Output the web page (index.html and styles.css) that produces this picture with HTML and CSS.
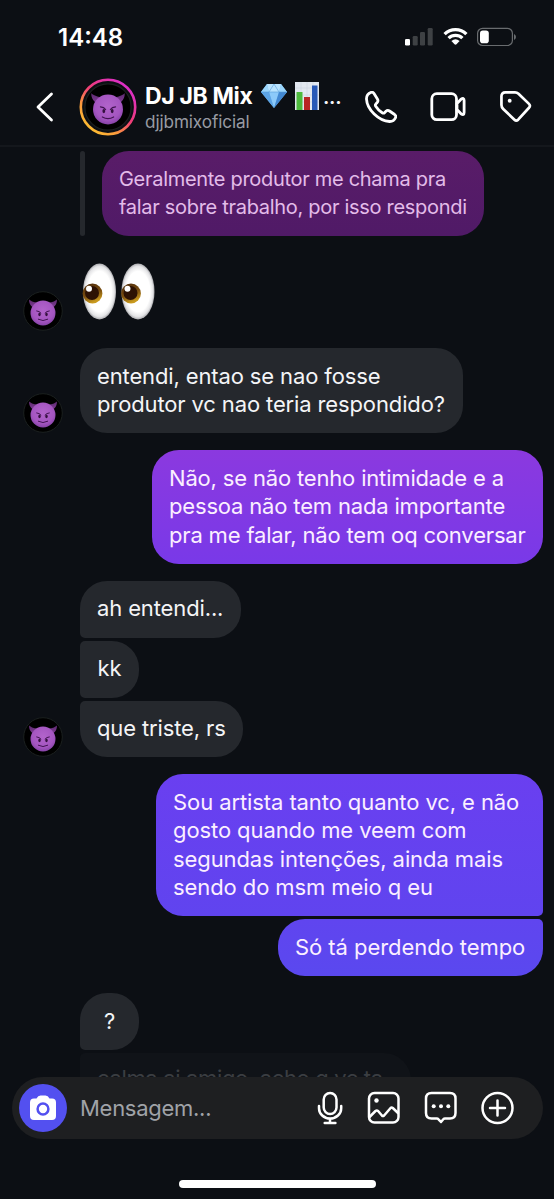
FILE: index.html
```
<!DOCTYPE html>
<html lang="pt-BR">
<head>
<meta charset="utf-8">
<title>DJ JB Mix</title>
<link rel="stylesheet" href="styles.css">
</head>
<body>
<svg class="defs" aria-hidden="true">
  <defs>
    <radialGradient id="skin" cx=".5" cy=".4" r=".62"><stop offset="0" stop-color="#b264cb"/><stop offset=".7" stop-color="#a455c0"/><stop offset="1" stop-color="#8341a4"/></radialGradient>
    <linearGradient id="horn" x1="0" y1="0" x2="0" y2="1"><stop offset="0" stop-color="#5c2a6e"/><stop offset="1" stop-color="#7d3a92"/></linearGradient>
    <radialGradient id="eyeball" cx=".5" cy=".5" r=".5"><stop offset=".72" stop-color="#fff"/><stop offset=".9" stop-color="#e4e4e6"/><stop offset="1" stop-color="#a9a9ad"/></radialGradient>
    <linearGradient id="iris" x1="0" y1="0" x2=".4" y2="1"><stop offset="0" stop-color="#4b2a0c"/><stop offset=".6" stop-color="#7a4e10"/><stop offset="1" stop-color="#c99a1e"/></linearGradient>
    <linearGradient id="ring" x1=".1" y1=".95" x2=".8" y2=".1"><stop offset="0" stop-color="#fdc52f"/><stop offset=".3" stop-color="#fb9a3c"/><stop offset=".6" stop-color="#f03c78"/><stop offset="1" stop-color="#dd2fc4"/></linearGradient>
    <symbol id="devil" viewBox="0 0 40 40">
      <circle cx="20" cy="20" r="19.3" fill="#000" stroke="#1b201f" stroke-width="1"/>
      <path d="M6 8.500q2.500 2.300 7.500 3.300L9.300 16Q6 13.300 6 8.500zM34 8.500q-2.500 2.300-7.500 3.300l4.200 4.200Q34 13.300 34 8.500z" fill="url(#horn)"/>
      <circle cx="20" cy="22" r="12.500" fill="url(#skin)"/>
      <path d="M13.700 19.900q3 .2 4.300 2.200M26.300 19.900q-3 .2-4.300 2.200M15.300 28.300q4.700 2.700 9.400 0" fill="none" stroke="#421452" stroke-width="1" stroke-linecap="round"/>
      <ellipse cx="16.500" cy="23.400" rx="1.200" ry="1.800" fill="#35103f"/><ellipse cx="23.500" cy="23.400" rx="1.200" ry="1.800" fill="#35103f"/>
    </symbol>
  </defs>
</svg>
<div class="phone">
  <div class="status">
    <span class="clock">14:48</span>
    <svg class="status-icons" width="114" height="20" viewBox="0 0 114 20">
      <rect x="1" y="12" width="5" height="6.500" rx="1.300" fill="#fff"/>
      <g fill="#3e4144"><rect x="8.700" y="9" width="5" height="9.500" rx="1.300"/><rect x="16" y="5" width="5" height="13.500" rx="1.300"/><rect x="23.700" y="1" width="5" height="17.500" rx="1.300"/></g>
      <g fill="none" stroke="#fff" stroke-width="3.300"><path d="M40.600 7.100a15.500 15.500 0 0 1 21.800 0"/><path d="M44.600 11.200a9.800 9.800 0 0 1 13.800 0"/></g>
      <path d="M47.400 14q4.100-3.500 8.200 0l-3.100 3.300q-1 .9-2 0z" fill="#fff"/>
      <rect x="73.600" y="1.300" width="34.800" height="17.200" rx="5" fill="none" stroke="#696c6f" stroke-width="1.200"/>
      <rect x="76" y="3.600" width="8.800" height="12.600" rx="2.800" fill="#fff"/>
      <path d="M110 7q2 .8 2 3t-2 3z" fill="#696c6f"/>
    </svg>
  </div>
  <header class="header">
    <svg class="back" width="18" height="30" viewBox="0 0 18 30"><path d="M15.500 2 2 15l13.500 13" class="line"/></svg>
    <svg class="avatar-lg" width="58" height="58" viewBox="0 0 58 58"><circle cx="29" cy="29" r="27.200" fill="none" stroke="url(#ring)" stroke-width="2.600"/><use href="#devil" x="5" y="5" width="48" height="48"/></svg>
    <div class="who">
      <div class="name"><span class="name-text">DJ JB Mix</span>
        <svg class="gem" width="28" height="26" viewBox="0 0 28 26"><path d="M7 1h14l6 8-13 16L1 9z" fill="#70b7ef"/><path d="M7 1 1 9h8zM21 1l6 8h-8z" fill="#9ad5fb"/><path d="M7 1h14l-2 8H9z" fill="#b9e4ff"/><path d="M9 9h10l-5 16z" fill="#8ccafa"/><path d="M1 9h8l5 16z" fill="#5da4e5"/><path d="M19 9h8L14 25z" fill="#4288d2"/><path d="M14 1 9 9m5-8 5 8M1 9h26" stroke="#559bd9" stroke-width=".6"/></svg>
        <svg class="chart" width="24" height="28" viewBox="0 0 24 28"><path d="M0 0h24v28H0z" fill="#e2e8f0"/><path d="M0 6h24M0 13h24M0 20h24M6 0v28M12 0v28M18 0v28" stroke="#ccd4e0" stroke-width=".6"/><path d="M1.500 10H7.500v18H1.500z" fill="#4dba3d"/><path d="M9 15h6v13H9z" fill="#b82623"/><path d="M17 3.500h5.500V28H17z" fill="#2859b7"/></svg>
        <span class="dots">...</span>
      </div>
      <div class="handle">djjbmixoficial</div>
    </div>
    <div class="actions">
      <svg width="32" height="32" viewBox="1 1 32 32"><path class="line" d="M7.200 2.300C4.300 3.500 2.300 5.900 2.500 9.200 3 19.500 14.800 31.200 25.500 31.500c3.300.1 5-1.500 6-3.800.6-1.200.2-2.300-.9-3.200l-5.100-3.500c-1.200-.8-2.500-.7-3.500.3l-1.300 1.300c-.7.600-1.700.6-2.500.1-2.900-1.800-4.800-3.800-6.500-6.500-.5-.8-.4-1.700.2-2.300l1.100-1.200c1.100-1.100 1.200-2.400.4-3.700L10 3.600C9.200 2.300 8.400 1.900 7.200 2.300z"/></svg>
      <svg width="36" height="30" viewBox="1 0 36 30"><rect class="line" x="2.800" y="1.700" width="24.700" height="26" rx="5"/><path class="line" d="m28 11.500 4-4.300q3.100-2 3.100 1.200v12.200q0 3.200-3.100 1.200L28 17.500z"/></svg>
      <svg width="32" height="32" viewBox="1 1 33 33"><path class="line" d="M6.500 2.500h10q2 0 3.600 1.400l10.800 10.400q2 2 0 4L19.700 30.600q-1.900 1.900-3.800 0L4.300 19.500Q2.500 17.700 2.500 15.500v-9q0-4 4-4z"/><circle cx="11" cy="11" r="2" fill="#fff"/></svg>
    </div>
  </header>
  <main class="chat">
    <div class="reply"><div class="bubble quoted">Geralmente produtor me chama pra<br>falar sobre trabalho, por isso respondi</div></div>
    <div class="row eyes-row">
      <svg class="avatar"><use href="#devil"/></svg>
      <svg class="eyes" width="74" height="57" viewBox="0 0 74 57">
        <g id="eye"><ellipse cx="17.500" cy="28.500" rx="16.500" ry="28" fill="url(#eyeball)"/><circle cx="10.500" cy="30.500" r="9.900" fill="url(#iris)"/><circle cx="10" cy="30" r="7" fill="#2d1204"/><circle cx="7" cy="25.700" r="3" fill="#fff"/></g>
        <use href="#eye" x="38.500"/>
      </svg>
    </div>
    <div class="row row-entendi"><svg class="avatar"><use href="#devil"/></svg><div class="bubble in">entendi, entao se nao fosse<br>produtor vc nao teria respondido?</div></div>
    <div class="bubble out out-a">Não, se não tenho intimidade e a<br>pessoa não tem nada importante<br>pra me falar, não tem oq conversar</div>
    <div class="group">
      <div class="bubble in first w-ah">ah entendi...</div>
      <div class="bubble in middle w-short">kk</div>
      <div class="row"><svg class="avatar"><use href="#devil"/></svg><div class="bubble in last w-que">que triste, rs</div></div>
    </div>
    <div class="bubble out out-b">Sou artista tanto quanto vc, e não<br>gosto quando me veem com<br>segundas intenções, ainda mais<br>sendo do msm meio q eu</div>
    <div class="bubble out out-c">Só tá perdendo tempo</div>
    <div class="group">
      <div class="bubble in first w-short">?</div>
      <div class="bubble in middle faded">calma ai amigo, acho q vc ta</div>
    </div>
  </main>
  <footer class="composer">
    <span class="camera"><svg width="28" height="26" viewBox="0 0 28 26"><path d="M5 3.500h2.500Q9 .5 11.500.500h5q2.500 0 4 3H23q4 0 4 4V21q0 4-4 4H5q-4 0-4-4V7.500q0-4 4-4z" fill="#fff"/><circle cx="14" cy="14" r="5.400" fill="#fff" stroke="#5350f0" stroke-width="2.500"/></svg></span>
    <span class="placeholder">Mensagem...</span>
    <div class="tools">
      <svg width="26" height="34" viewBox="0 0 26 34"><rect class="line thin" x="6.700" y="2" width="12.800" height="21" rx="6.400"/><path class="line thin" d="M2 15v2.200a11.100 10.300 0 0 0 22.200 0V15M13 28v4M7.700 32h10.700"/></svg>
      <svg width="34" height="34" viewBox="0 0 34 34"><rect class="line thin" x="2" y="2" width="29.500" height="29.500" rx="5.500"/><circle cx="9.500" cy="9.500" r="2.200" fill="#fff"/><path class="line thin" d="m2.500 26 6-6q1.300-1 2.600 0l3.800 4.500q1 1 2.200 0l6.500-7.500q1-1 2.200 0l5.200 5"/></svg>
      <svg width="34" height="34" viewBox="0 0 34 34"><path class="line thin" d="M7.500 2h18.500q5.500 0 5.500 5.500V22q0 5.500-5.500 5.500h-5q-1 0-1.700.8L17 31l-2.500-2.700q-.7-.8-1.700-.8H7.500Q2 27.500 2 22V7.500Q2 2 7.500 2z"/><g fill="#fff"><circle cx="9.700" cy="15.200" r="2"/><circle cx="17" cy="15.200" r="2"/><circle cx="24.300" cy="15.200" r="2"/></g></svg>
      <svg width="34" height="34" viewBox="0 0 34 34"><circle class="line thin" cx="16.500" cy="17" r="15"/><path class="line thin" d="M16.500 9.500v15M9 17h15"/></svg>
    </div>
  </footer>
  <div class="home"></div>
</div>
</body>
</html>
```
FILE: styles.css
```
* { box-sizing: border-box; }
body { margin: 0; background: #0c0f14; color: #f4f5f7; font-family: Inter, "Liberation Sans", sans-serif; }
svg { display: block; flex: none; }
.defs { position: absolute; width: 0; height: 0; }
.phone { width: 554px; height: 1199px; display: flex; flex-direction: column; overflow: hidden; }
.line { fill: none; stroke: #fff; stroke-width: 2.8; stroke-linecap: round; stroke-linejoin: round; }
.thin { stroke-width: 2.5; }

.status { height: 74px; display: flex; justify-content: space-between; padding: 24px 36px 0 58px; flex: none; }
.clock { padding-top: 1px; font-size: 24px; line-height: 26px; font-weight: 600; color: #fff; }
.status-icons { margin-top: 3px; }

.header { height: 73px; flex: none; display: flex; align-items: flex-start; padding: 3px 21px 0 36px; border-bottom: 2px solid #14171c; }
.back { margin-top: 15px; }
.avatar-lg { margin: 1px 0 0 25px; }
.who { margin-left: 8px; width: 200px; }
.name { display: flex; height: 32px; padding-top: 3px; white-space: nowrap; }
.name-text { width: 108px; margin-right: 7px; font-size: 23px; line-height: 32px; font-weight: 700; color: #fff; letter-spacing: -.35px; }
.gem { margin-top: 3px; }
.chart { margin: 2px 4px 0 7px; }
.dots { font-size: 20px; line-height: 34px; font-weight: 600; letter-spacing: -.3px; }
.handle { font-size: 17.2px; line-height: 22px; margin-top: 2px; color: #989ba3; letter-spacing: -.12px; }
.actions { display: flex; gap: 33.5px; align-items: center; margin: 14px 0 0 19.5px; }

.chat { height: 930px; flex: none; overflow: hidden; display: flex; flex-direction: column; padding: 4px 11px 0 23px; }
.chat > * { flex: none; }
.bubble { flex: none; width: fit-content; padding: 13.3px 17px 15.1px; font-size: 22px; line-height: 28.4px; letter-spacing: -.13px; border-radius: 27px; white-space: nowrap; }
.in { background: #25282d; }
.out { align-self: flex-end; color: #fbefff; }
.reply { margin-left: 57px; padding-left: 22px; position: relative; }
.reply::before { content: ""; position: absolute; left: 0; top: 0; width: 5px; height: 85px; border-radius: 3px; background: #25282d; }
.quoted { width: 382px; padding-top: 14px; padding-bottom: 14.4px; background: linear-gradient(#591c68, #501a67); color: #e3bce9; font-size: 20px; letter-spacing: -.3px; }
.row { display: flex; align-items: flex-end; gap: 17px; }
.avatar { width: 40px; height: 40px; }
.eyes-row { margin-top: 27px; height: 68px; }
.eyes { align-self: flex-start; margin-left: 2px; }
.row-entendi { margin-top: 17px; }
.row-entendi .bubble { width: 383px; }
.out-a { width: 391px; margin-top: 17px; letter-spacing: -.17px; background: linear-gradient(#8b39df, #7939e8); }
.group { display: flex; flex-direction: column; gap: 3px; margin-top: 17px; }
.group > .bubble { margin-left: 57px; }
.bubble.first { border-bottom-left-radius: 5px; }
.bubble.middle { border-top-left-radius: 5px; border-bottom-left-radius: 5px; }
.bubble.last { border-top-left-radius: 5px; }
.w-ah { width: 161px; }
.w-que { width: 163px; }
.w-short { width: 59px; padding-left: 0; padding-right: 0; text-align: center; }
.out-b { width: 387px; margin-top: 17px; letter-spacing: -.09px; background: linear-gradient(#6a3ff0, #6044ef); border-bottom-right-radius: 5px; }
.out-c { width: 265px; margin-top: 3px; letter-spacing: -.06px; background: linear-gradient(#6045ef, #5a48ef); border-top-right-radius: 5px; }
.faded { width: 331px; padding-top: 11px; background: #101318; color: #3b3e42; letter-spacing: -.35px; }

.composer { flex: none; width: 531px; height: 62px; margin-left: 12px; border-radius: 31px; background: #1e1f21; display: flex; align-items: center; padding: 0 28px 0 7px; }
.camera { width: 48px; height: 48px; border-radius: 50%; background: #5350f0; display: grid; place-items: center; }
.placeholder { margin-left: 13px; font-size: 22px; letter-spacing: -.28px; color: #a0a3a8; }
.tools { display: flex; align-items: center; gap: 23px; margin-left: auto; }
.tools > :first-child { margin-right: 1px; }
.home { width: 197px; height: 8px; border-radius: 4px; background: #fff; margin: 41px 0 0 179px; }
```
